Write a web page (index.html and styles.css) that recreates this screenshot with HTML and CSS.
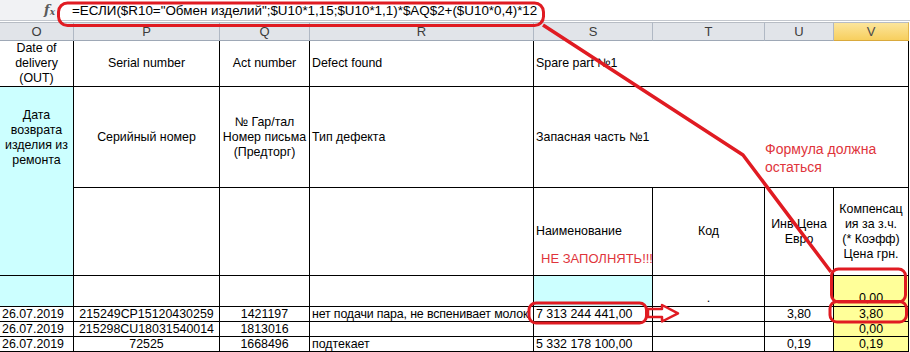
FILE: index.html
```html
<!DOCTYPE html>
<html lang="ru">
<head>
    <meta charset="UTF-8">
    <title>Компенсация за з.ч.</title>
    <link rel="stylesheet" href="styles.css">
</head>
<body>
    <div class="sheet">
        <div class="formula-bar">
            <div class="fx-box"><span class="fx">f<sub>x</sub></span></div>
            <div class="formula">=ЕСЛИ($R10="Обмен изделий";$U10*1,15;$U10*1,1)*$AQ$2+($U10*0,4)*12</div>
        </div>

        <table class="grid">
            <colgroup>
                <col class="c-o"><col class="c-p"><col class="c-q"><col class="c-r">
                <col class="c-s"><col class="c-t"><col class="c-u"><col class="c-v">
            </colgroup>
            <thead>
                <tr class="letters">
                    <th>O</th><th>P</th><th>Q</th><th>R</th>
                    <th>S</th><th>T</th><th>U</th><th class="active">V</th>
                </tr>
            </thead>
            <tbody>
                <tr class="r1">
                    <td class="center">Date of<br>delivery<br>(OUT)</td>
                    <td class="center">Serial number</td>
                    <td class="center">Act number</td>
                    <td>Defect found</td>
                    <td colspan="4">Spare part №1</td>
                </tr>
                <tr class="r2">
                    <td class="center cyan open">Дата<br>возврата<br>изделия из<br>ремонта</td>
                    <td class="center">Серийный номер</td>
                    <td class="center">№ Гар/тал<br>Номер письма<br>(Предторг)</td>
                    <td>Тип дефекта</td>
                    <td colspan="4">Запасная часть №1</td>
                </tr>
                <tr class="r3">
                    <td class="cyan"></td>
                    <td></td>
                    <td></td>
                    <td></td>
                    <td>Наименование</td>
                    <td class="center">Код</td>
                    <td class="center">Инв Цена<br>Евро</td>
                    <td class="center">Компенсац<br>ия за з.ч.<br>(* Коэфф)<br>Цена грн.</td>
                </tr>
                <tr class="r4">
                    <td class="cyan"></td>
                    <td></td>
                    <td></td>
                    <td></td>
                    <td class="cyan"></td>
                    <td class="center bottom">.</td>
                    <td></td>
                    <td class="center bottom yellow">0,00</td>
                </tr>
                <tr class="data">
                    <td>26.07.2019</td>
                    <td class="center">215249CP15120430259</td>
                    <td class="center">1421197</td>
                    <td class="tight">нет подачи пара, не вспенивает молок</td>
                    <td>7 313 244 441,00</td>
                    <td></td>
                    <td class="num">3,80</td>
                    <td class="center yellow">3,80</td>
                </tr>
                <tr class="data">
                    <td>26.07.2019</td>
                    <td class="center">215298CU18031540014</td>
                    <td class="center">1813016</td>
                    <td></td>
                    <td></td>
                    <td></td>
                    <td></td>
                    <td class="center yellow">0,00</td>
                </tr>
                <tr class="data">
                    <td>26.07.2019</td>
                    <td class="center">72525</td>
                    <td class="center">1668496</td>
                    <td>подтекает</td>
                    <td>5 332 178 100,00</td>
                    <td></td>
                    <td class="num">0,19</td>
                    <td class="center yellow">0,19</td>
                </tr>
            </tbody>
        </table>

        <div class="note note-formula">Формула должна<br>остаться</div>
        <div class="note note-empty">НЕ ЗАПОЛНЯТЬ!!!</div>

        <svg class="marks" width="910" height="352" viewBox="0 0 910 352">
            <g fill="none" stroke="#e01b22" stroke-linejoin="round">
                <rect x="58.5" y="3" width="485" height="22.5" rx="9" stroke-width="3"/>
                <polyline points="543,25 743,155 831,272" stroke-width="3.5"/>
                <rect x="831.5" y="269" width="74" height="33" rx="7" stroke-width="3"/>
                <rect x="830" y="301.5" width="76.5" height="20.5" rx="7" stroke-width="3"/>
                <rect x="529" y="303" width="117.5" height="20" rx="7" stroke-width="3"/>
                <path d="M648 309 H662 V305 L678 313.3 L662 321.5 V317 H648 Z" stroke-width="2.5"/>
            </g>
        </svg>
    </div>
</body>
</html>
```

FILE: styles.css
```css
body {
    margin: 0;
    background-color: #ffffff;
    font-family: "Liberation Sans", Arial, sans-serif;
}

.sheet {
    position: relative;
    width: 910px;
    height: 352px;
    overflow: hidden;
}

/* formula bar */
.formula-bar {
    display: flex;
    height: 20px;
    border-bottom: 1px solid #c3c7ce;
}

.fx-box {
    width: 60px;
    background-color: #f1f2f4;
    display: flex;
    justify-content: flex-end;
    align-items: center;
    padding-right: 5px;
    box-sizing: border-box;
}

.fx {
    font-family: "DejaVu Serif", "Liberation Serif", serif;
    font-style: italic;
    font-weight: bold;
    font-size: 13px;
    color: #5a5a5a;
    line-height: 1;
}

.fx sub {
    font-size: 9px;
    vertical-align: -1px;
}

.formula {
    flex: 1;
    padding-left: 12px;
    font-size: 13.4px;
    line-height: 21px;
    color: #000000;
    white-space: nowrap;
}

/* grid */
.grid {
    table-layout: fixed;
    width: 909px;
    border-collapse: separate;
    border-spacing: 0;
    margin-top: 1px;
}

.c-o { width: 74px; }
.c-p { width: 146px; }
.c-q { width: 90px; }
.c-r { width: 224px; }
.c-s { width: 119px; }
.c-t { width: 112px; }
.c-u { width: 69px; }
.c-v { width: 75px; }

.letters {
    height: 19px;
}

.letters th {
    padding: 0;
    font-size: 13px;
    font-weight: normal;
    color: #3c3c3c;
    background-color: #e1e4e9;
    border-top: 1px solid #b7bcc4;
    border-bottom: 1px solid #9ea8b6;
    border-right: 1px solid #b0b8c4;
    text-align: center;
    line-height: 17px;
}

.letters th.active {
    background: linear-gradient(#fce59c, #f7cf5e);
    border-right-color: #e2b54a;
    border-bottom-color: #d9a93d;
    color: #4a4a4a;
}

.grid td {
    padding: 0 2px;
    border-right: 1px solid #000000;
    border-bottom: 1px solid #000000;
    font-size: 12.4px;
    line-height: 15px;
    color: #000000;
    vertical-align: middle;
    white-space: nowrap;
    overflow: hidden;
}

.r1 { height: 45px; }
.r2 { height: 101px; }
.r3 { height: 88px; }
.r4 { height: 31px; }
.data { height: 15px; }

.data td {
    line-height: 14px;
}

.grid td.center { text-align: center; }
.grid td.bottom { vertical-align: bottom; }
.grid td.num { text-align: right; padding-right: 22px; }
.grid td.open { border-bottom: none; }
.grid td.tight { letter-spacing: -0.15px; padding-right: 0; }

.cyan { background-color: #ccffff; }
.yellow { background-color: #ffff99; }

/* annotations */
.note {
    position: absolute;
    color: #e0343b;
    white-space: nowrap;
}

.note-formula {
    left: 765px;
    top: 140px;
    font-size: 14px;
    line-height: 18px;
}

.note-empty {
    left: 541px;
    top: 251px;
    font-size: 13px;
    line-height: 16px;
}

.marks {
    position: absolute;
    left: 0;
    top: 0;
    pointer-events: none;
}
```
